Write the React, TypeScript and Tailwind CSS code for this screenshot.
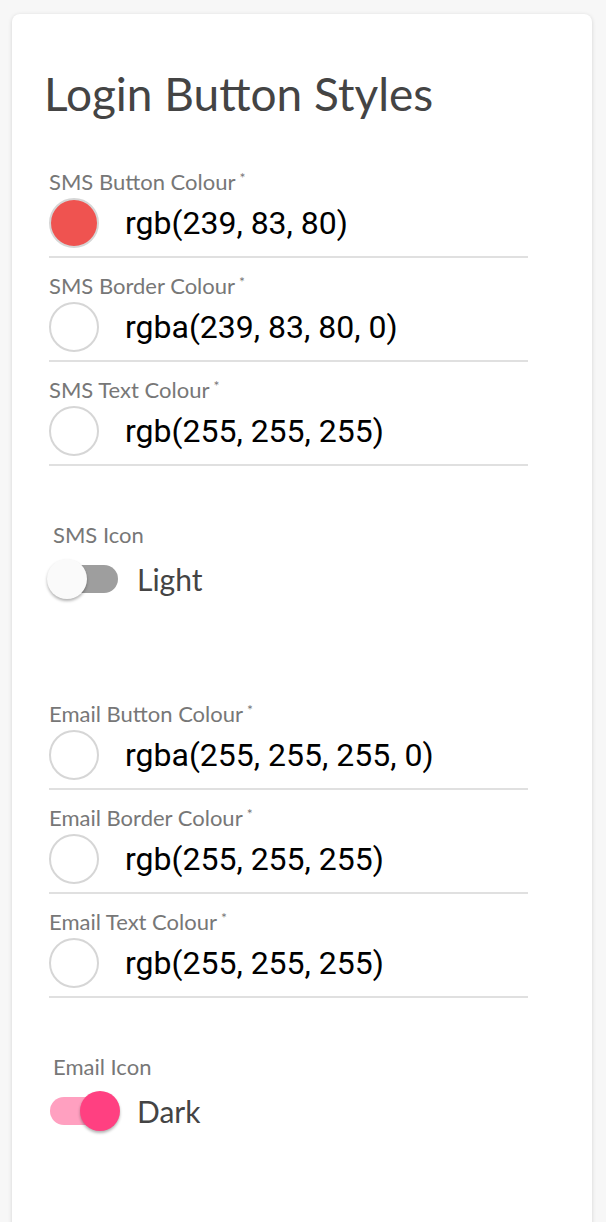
import React from "react";

const sans = { fontFamily: "Lato, 'Open Sans', sans-serif" };

function ColourField({ label, value, swatch }: { label: string; value: string; swatch?: string }) {
  return (
    <div className="flex flex-col w-[479px] border-b-2 border-[#e0e0e0] pb-[8px]">
      <div className="h-[28px] leading-[28px] text-[22px] text-[#777]" style={sans}>
        {label}
        <span className="text-[14px] align-top relative top-[-4px] ml-[4px]">*</span>
      </div>
      <div className="mt-[2px] h-[50px] flex items-center">
        <div
          className="w-[50px] h-[50px] rounded-full border-2 border-[#d6d6d6] shrink-0"
          style={{ background: swatch ?? "#fff" }}
        />
        <div
          className="ml-[26px] text-[32px] text-black leading-none"
          style={{ fontFamily: "Roboto, sans-serif" }}
        >
          {value}
        </div>
      </div>
    </div>
  );
}

function Toggle({ on, label }: { on: boolean; label: string }) {
  return (
    <div className="flex items-center h-[40px]">
      <div className="relative w-[73px] h-[40px] shrink-0">
        <div
          className={
            "absolute left-[3px] top-[6px] w-[68px] h-[28px] rounded-full " +
            (on ? "bg-[#ffa0c0]" : "bg-[#9e9e9e]")
          }
        />
        <div
          className={
            "absolute top-0 w-[40px] h-[40px] rounded-full shadow-[0_2px_3px_rgba(0,0,0,0.3)] " +
            (on ? "left-[33px] bg-[#ff4081]" : "left-0 bg-[#fafafa]")
          }
        />
      </div>
      <div className="ml-[17px] text-[30px] text-[#444]" style={sans}>
        {label}
      </div>
    </div>
  );
}

function IconField({ label, on, value }: { label: string; on: boolean; value: string }) {
  return (
    <div className="flex flex-col">
      <div className="h-[28px] leading-[28px] text-[22px] text-[#777] ml-[4px]" style={sans}>
        {label}
      </div>
      <div className="mt-[10px] ml-[-2px]">
        <Toggle on={on} label={value} />
      </div>
    </div>
  );
}

export default function App() {
  return (
    <div className="min-h-[1222px] bg-[#f7f7f7] pt-[14px] pl-[12px] pr-[14px]">
      <div className="bg-white rounded-[8px] shadow-[0_1px_4px_rgba(0,0,0,0.15)] min-h-[1240px] pl-[37px] pt-[50px]">
        <h1 className="text-[46px] leading-[60px] text-[#444] ml-[-5px]" style={sans}>
          Login Button Styles
        </h1>
        <div className="mt-[44px] flex flex-col gap-[14px]">
          <ColourField label="SMS Button Colour" value="rgb(239, 83, 80)" swatch="#ef5350" />
          <ColourField label="SMS Border Colour" value="rgba(239, 83, 80, 0)" />
          <ColourField label="SMS Text Colour" value="rgb(255, 255, 255)" />
        </div>
        <div className="mt-[55px]">
          <IconField label="SMS Icon" on={false} value="Light" />
        </div>
        <div className="mt-[101px] flex flex-col gap-[14px]">
          <ColourField label="Email Button Colour" value="rgba(255, 255, 255, 0)" />
          <ColourField label="Email Border Colour" value="rgb(255, 255, 255)" />
          <ColourField label="Email Text Colour" value="rgb(255, 255, 255)" />
        </div>
        <div className="mt-[55px]">
          <IconField label="Email Icon" on={true} value="Dark" />
        </div>
      </div>
    </div>
  );
}
